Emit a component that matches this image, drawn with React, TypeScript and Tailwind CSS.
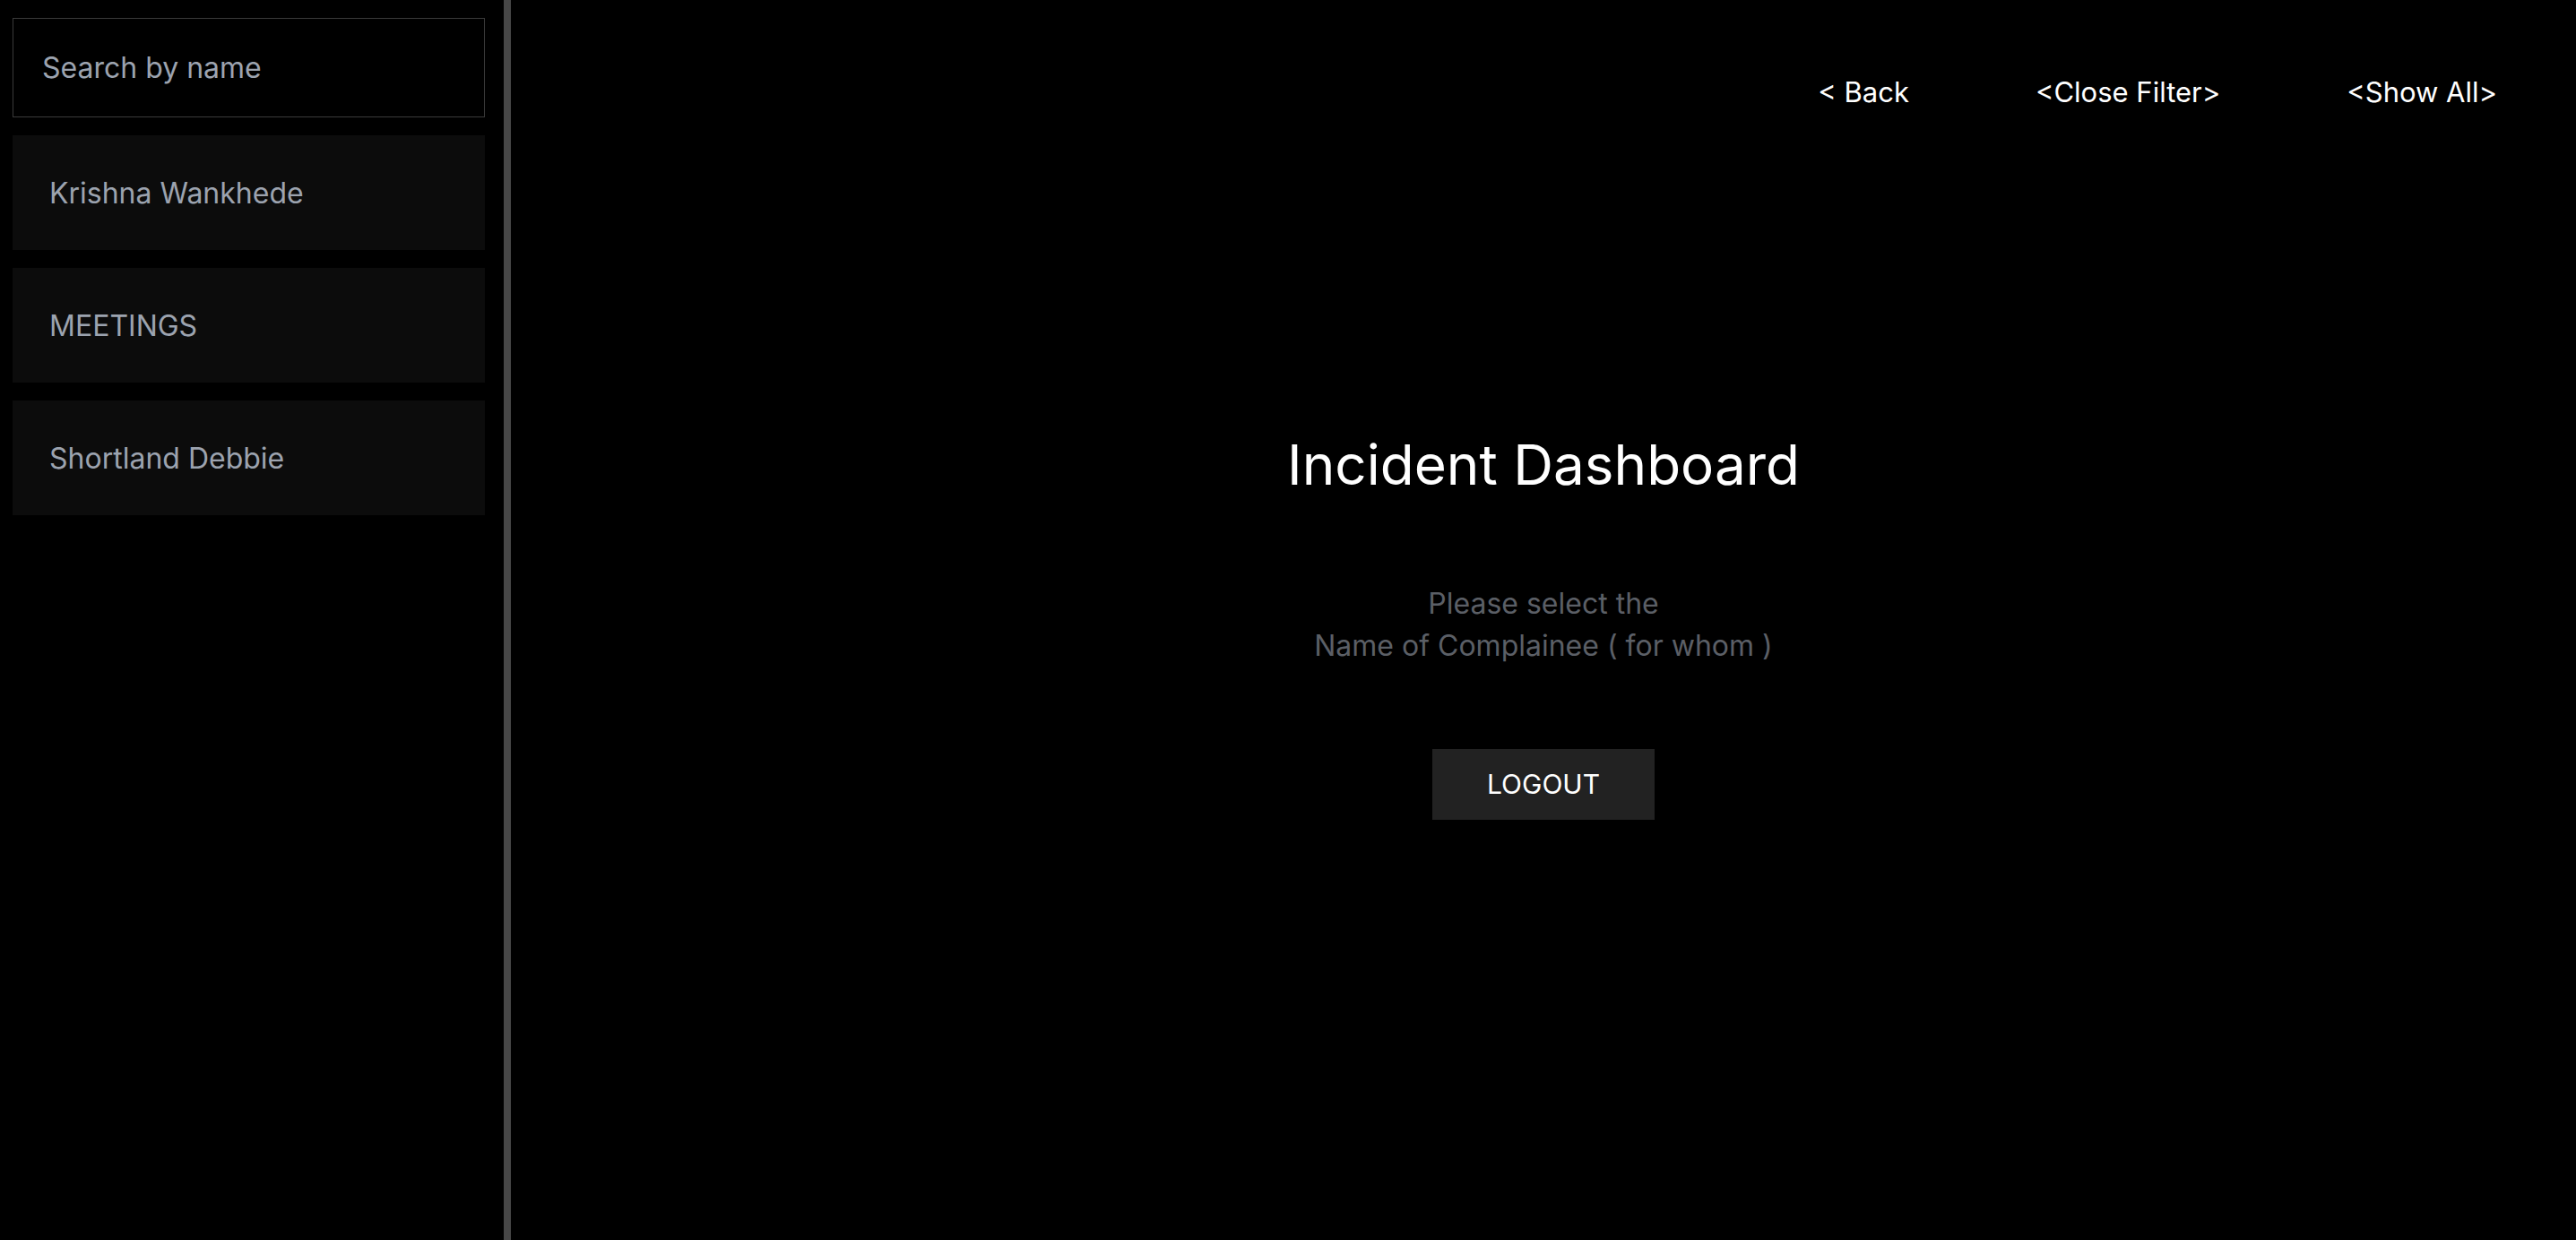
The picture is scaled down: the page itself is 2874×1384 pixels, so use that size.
const people = ['Krishna Wankhede', 'MEETINGS', 'Shortland Debbie'];

const App = () => {
    return (
        <div className="flex w-full h-[1384px] bg-black font-['Inter',sans-serif] overflow-hidden">
            {/* Sidebar */}
            <aside className="w-[562px] h-full flex-shrink-0 pl-[14px] pt-[20px]">
                <div className="w-[527px] flex flex-col gap-[20px]">
                    <input
                        type="text"
                        placeholder="Search by name"
                        className="w-full h-[111px] bg-black border border-[#3a3a3a] px-[32px] text-[32px] text-[#9ca3af] placeholder:text-[#9ca3af] outline-none"
                    />
                    {people.map((name) => (
                        <div key={name} className="h-[128px] bg-[#0c0c0c] flex items-center px-[41px] pt-[2px] text-[32px] text-[#9ca3af]">
                            {name}
                        </div>
                    ))}
                </div>
            </aside>

            {/* Divider */}
            <div className="w-[8px] h-full bg-[#474747] flex-shrink-0"></div>

            {/* Main */}
            <main className="flex-1 h-full flex flex-col">
                <nav className="flex justify-end items-center gap-[141px] pr-[88px] pt-[80px] text-[31px] text-white">
                    <span>&lt; Back</span>
                    <span>&lt;Close Filter&gt;</span>
                    <span>&lt;Show All&gt;</span>
                </nav>

                <div className="flex flex-col items-center pt-[361px]">
                    <h1 className="text-[62px] text-white leading-none">Incident Dashboard</h1>
                    <p className="mt-[100px] text-center text-[32px] leading-[47px] text-[#5b5f66]">
                        Please select the
                        <br />
                        Name of Complainee ( for whom )
                    </p>
                    <button className="mt-[92px] w-[248px] h-[79px] bg-[#222222] text-white text-[30px]">
                        LOGOUT
                    </button>
                </div>
            </main>
        </div>
    );
};

export default App;
